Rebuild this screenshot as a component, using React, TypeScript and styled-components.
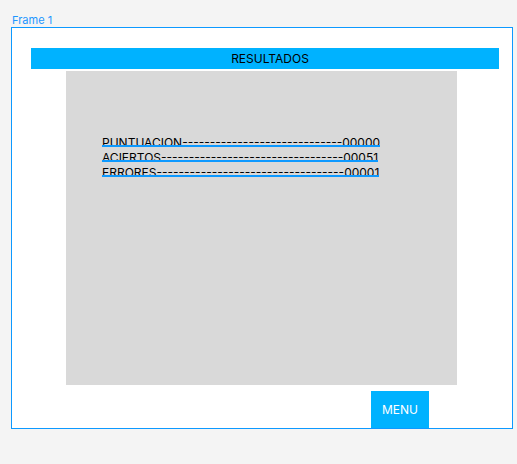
import React from "react";
import styled, { createGlobalStyle } from "styled-components";

const Global = createGlobalStyle`
  html, body { margin: 0; padding: 0; background: #f4f4f4; }
  body { font-family: Inter, "Noto Sans", sans-serif; }
`;

const Canvas = styled.div`
  padding: 13px 0 0 11px;
`;

const FrameLabel = styled.div`
  font-family: Inter, sans-serif;
  font-size: 11px;
  line-height: 14px;
  height: 14px;
  color: #1e96ff;
  padding-left: 1px;
`;

const Frame = styled.div`
  box-sizing: border-box;
  width: 502px;
  height: 402px;
  border: 1px solid #0d99ff;
  background: #ffffff;
  display: flex;
  flex-direction: column;
  align-items: flex-start;
`;

const TitleBar = styled.div`
  box-sizing: border-box;
  margin: 20px 0 0 19px;
  width: 468px;
  height: 21px;
  padding-left: 10px;
  background: #00b2ff;
  color: #000;
  font-size: 12px;
  display: flex;
  align-items: center;
  justify-content: center;
`;

const Panel = styled.div`
  box-sizing: border-box;
  margin: 2px 0 0 54px;
  width: 391px;
  height: 314px;
  background: #d9d9d9;
  padding: 64px 0 0 36px;
  display: flex;
  flex-direction: column;
  align-items: flex-start;
`;

const Line = styled.div`
  position: relative;
  font-size: 12px;
  line-height: 15px;
  color: #000;
  white-space: pre;

  &::after {
    content: "";
    position: absolute;
    left: 0;
    right: 0;
    top: 10px;
    height: 2px;
    background: #0d99ff;
  }
`;

const MenuButton = styled.div`
  margin: 6px 0 0 359px;
  width: 58px;
  height: 37px;
  background: #00b2ff;
  color: #fff;
  font-size: 12px;
  display: flex;
  align-items: center;
  justify-content: center;
`;

const rows = [
  "PUNTUACION" + "-".repeat(29) + "00000",
  "ACIERTOS" + "-".repeat(33) + "00051",
  "ERRORES" + "-".repeat(34) + "00001",
];

export default function App() {
  return (
    <>
      <Global />
      <Canvas>
        <FrameLabel>Frame 1</FrameLabel>
        <Frame>
          <TitleBar>RESULTADOS</TitleBar>
          <Panel>
            {rows.map((r) => (
              <Line key={r}>{r}</Line>
            ))}
          </Panel>
          <MenuButton>MENU</MenuButton>
        </Frame>
      </Canvas>
    </>
  );
}
